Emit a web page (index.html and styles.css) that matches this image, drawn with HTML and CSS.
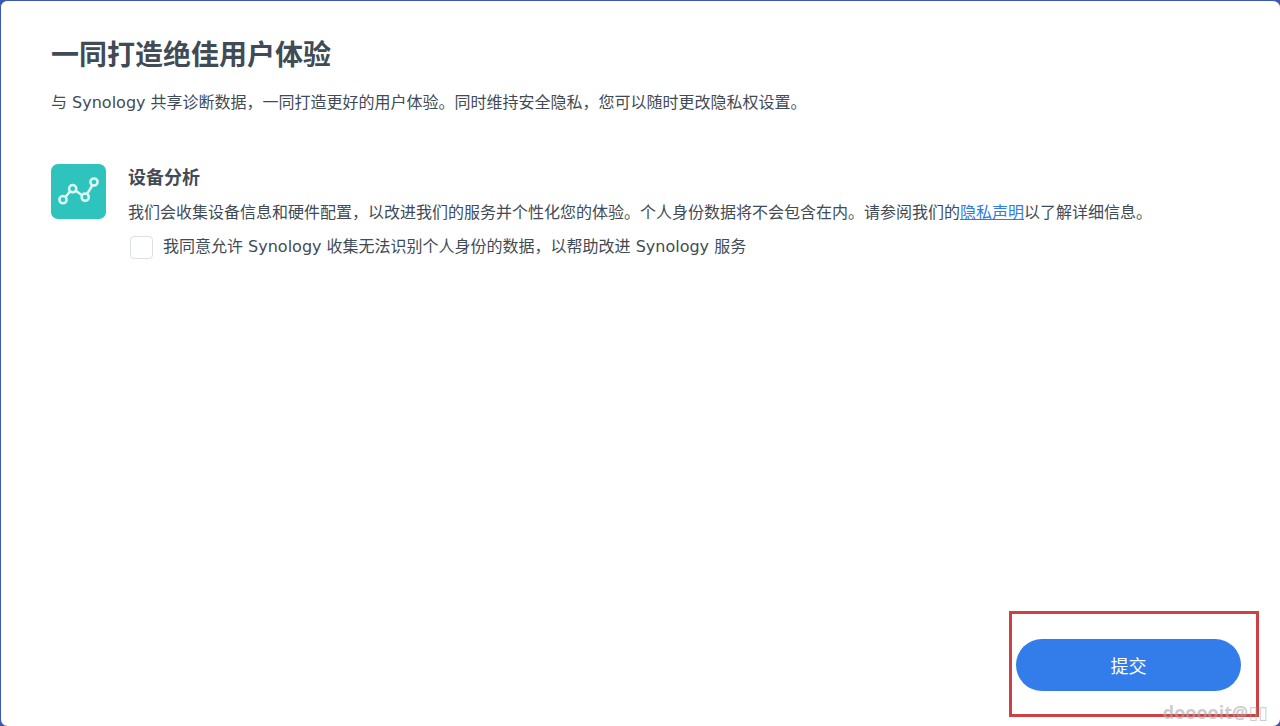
FILE: index.html
```html
<!DOCTYPE html>
<html lang="zh-CN">
<head>
    <meta charset="UTF-8">
    <meta name="viewport" content="width=device-width, initial-scale=1.0">
    <title>设备分析</title>
    <link rel="stylesheet" href="styles.css">
</head>
<body>
    <div class="panel">
        <main class="content">
            <h1>一同打造绝佳用户体验</h1>
            <p class="intro">与 Synology 共享诊断数据，一同打造更好的用户体验。同时维持安全隐私，您可以随时更改隐私权设置。</p>
            <section class="analytics">
                <svg class="analytics-icon" viewBox="0 0 55 55" aria-hidden="true">
                    <rect width="55" height="55" rx="7" fill="#2ec4bd"/>
                    <g fill="none" stroke="#dcfaf6" stroke-width="2.5">
                        <path d="M14.5 33 L19 27.5 M24.7 26.7 L31.2 31.2 M36.2 29.8 L41.2 21.5"/>
                        <circle cx="12" cy="35.7" r="3.6"/>
                        <circle cx="21.7" cy="24.7" r="3.6"/>
                        <circle cx="34.2" cy="33.2" r="3.6"/>
                        <circle cx="43" cy="18" r="3.6"/>
                    </g>
                </svg>
                <div class="analytics-body">
                    <h2>设备分析</h2>
                    <p>我们会收集设备信息和硬件配置，以改进我们的服务并个性化您的体验。个人身份数据将不会包含在内。请参阅我们的<a href="#">隐私声明</a>以了解详细信息。</p>
                    <div class="agree">
                        <input type="checkbox" id="agreeInput">
                        <label for="agreeInput">我同意允许 Synology 收集无法识别个人身份的数据，以帮助改进 Synology 服务</label>
                    </div>
                </div>
            </section>
        </main>
        <footer class="footer">
            <div class="highlight">
                <button type="button" class="submit">提交</button>
            </div>
        </footer>
        <span class="watermark">dooooit@<span class="boxes">▯▯</span></span>
    </div>
</body>
</html>
```

FILE: styles.css
```css
* {
    box-sizing: border-box;
}
body {
    margin: 0;
    background-color: #3c56b4;
    color: #414b55;
    font-family: "DejaVu Sans", "Noto Sans CJK SC", sans-serif;
    font-size: 16px;
    line-height: 24px;
}
h1, h2, p {
    margin: 0;
}
.panel {
    position: relative;
    display: flex;
    flex-direction: column;
    min-height: 100vh;
    border: solid #3c56b4;
    border-width: 1px 0 0 1px;
    border-radius: 7px;
    background-color: white;
}
.content {
    flex: 1;
    padding: 35px 50px;
}
h1 {
    font-size: 28px;
    line-height: 40px;
}
.intro {
    margin-top: 15px;
}
.analytics {
    display: flex;
    gap: 22px;
    margin-top: 49px;
}
.analytics-icon {
    flex: none;
    width: 55px;
    height: 55px;
}
h2 {
    font-size: 18px;
    line-height: 28px;
}
.analytics-body p {
    margin-top: 9px;
}
a {
    color: #317be8;
}
.agree {
    display: flex;
    align-items: center;
    gap: 10px;
    margin-top: 10px;
}
.agree input {
    appearance: none;
    width: 23px;
    height: 23px;
    margin: 0 0 0 2px;
    border: 1px solid #dcdfe2;
    border-radius: 4px;
    background-color: white;
}
.agree input:checked {
    background-color: #337deb;
}
.footer {
    display: flex;
    justify-content: flex-end;
    padding: 0 21px 9px;
}
.highlight {
    padding: 25px 15px 23px 4px;
    border: 3px solid #cd4145;
}
.submit {
    display: block;
    width: 225px;
    height: 52px;
    border: none;
    border-radius: 26px;
    background-color: #337deb;
    color: white;
    font-family: inherit;
    font-size: 18px;
    cursor: pointer;
}
.watermark {
    position: absolute;
    right: 12px;
    bottom: 1px;
    color: rgba(170, 170, 170, 0.6);
    font-family: "Open Sans", sans-serif;
    font-size: 18px;
    font-weight: bold;
}
.boxes {
    font-family: "DejaVu Sans", sans-serif;
    font-weight: normal;
}
```
